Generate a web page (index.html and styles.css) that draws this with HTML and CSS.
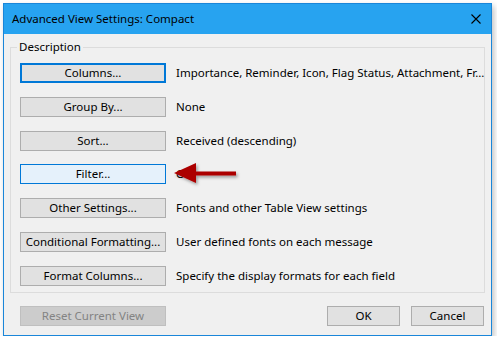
FILE: index.html
```html
<!DOCTYPE html>
<html>
<head>
<meta charset="utf-8">
<link rel="stylesheet" href="styles.css">
</head>
<body>
<div class="window">
  <div class="titlebar">
    <span class="title">Advanced View Settings: Compact</span>
    <svg class="close" width="10" height="10" viewBox="0 0 10 10"><path d="M0.5 0.5 L9.5 9.5 M9.5 0.5 L0.5 9.5" stroke="#000" stroke-width="1.1" fill="none"/></svg>
  </div>
  <div class="content">
    <div class="group">
      <span class="legend">Description</span>
      <div class="rows">
        <button class="btn focused">Columns...</button><span class="desc">Importance, Reminder, Icon, Flag Status, Attachment, Fr...</span>
        <button class="btn">Group By...</button><span class="desc">None</span>
        <button class="btn">Sort...</button><span class="desc">Received (descending)</span>
        <button class="btn hover">Filter...</button><span class="desc">Off</span>
        <button class="btn">Other Settings...</button><span class="desc">Fonts and other Table View settings</span>
        <button class="btn">Conditional Formatting...</button><span class="desc">User defined fonts on each message</span>
        <button class="btn">Format Columns...</button><span class="desc">Specify the display formats for each field</span>
      </div>
      <svg class="arrow" width="70" height="28" viewBox="0 0 70 28">
        <defs>
          <filter id="sh" x="-20%" y="-40%" width="150%" height="200%">
            <feDropShadow dx="1.5" dy="2" stdDeviation="1.5" flood-color="#000" flood-opacity="0.35"/>
          </filter>
        </defs>
        <path d="M2 11 L24 1 L24 9.5 L64 9.5 L64 13.5 L24 13.5 L24 21 Z" fill="#ac0000" filter="url(#sh)"/>
      </svg>
    </div>
    <div class="footer">
      <button class="btn disabled">Reset Current View</button>
      <div class="spacer"></div>
      <button class="btn small">OK</button>
      <button class="btn small">Cancel</button>
    </div>
  </div>
</div>
</body>
</html>
```

FILE: styles.css
```css
html, body {
  margin: 0;
  padding: 0;
  background: #ffffff;
}
body {
  font-family: "Noto Sans", "Open Sans", sans-serif;
  font-size: 11.5px;
  color: #000;
}
.window {
  margin: 3px 0 0 3px;
  width: 487px;
  height: 331px;
  border: 1px solid #1a86d9;
  background: #f0f0f0;
  box-shadow: 2px 3px 6px rgba(0,0,0,0.25);
  display: flex;
  flex-direction: column;
}
.titlebar {
  height: 29px;
  background: #27a3f0;
  display: flex;
  align-items: center;
  padding: 0 10px 1px 8px;
}
.title {
  flex: 1;
  font-size: 11.5px;
  color: #000;
}
.close {
  margin-right: 0;
}
.content {
  padding: 13px 6px 0 6px;
  flex: 1;
  display: flex;
  flex-direction: column;
}
.group {
  position: relative;
  border: 1px solid #dcdcdc;
  padding: 15px 9px 6px 9px;
}
.legend {
  position: absolute;
  top: -9px;
  left: 6px;
  padding: 0 2px 0 2px;
  background: #f0f0f0;
  line-height: 16px;
}
.rows {
  display: grid;
  grid-template-columns: 146px 1fr;
  column-gap: 10px;
  row-gap: 13.8px;
  align-items: center;
}
.btn {
  font-family: inherit;
  font-size: 11.5px;
  color: #000;
  height: 20px;
  width: 146px;
  padding: 0;
  margin: 0;
  background: #e1e1e1;
  border: 1px solid #adadad;
  line-height: 18px;
  white-space: nowrap;
}
.btn.focused {
  border: 2px solid #0078d7;
  line-height: 16px;
}
.btn.hover {
  background: #e5f1fb;
  border-color: #0078d7;
}
.btn.disabled {
  background: #cccccc;
  border-color: #bfbfbf;
  color: #838383;
}
.btn.small {
  width: 73px;
}
.desc {
  white-space: nowrap;
  line-height: 16px;
}
.arrow {
  position: absolute;
  left: 161px;
  top: 114px;
}
.footer {
  display: flex;
  margin-top: 13px;
  padding-left: 10px;
  padding-right: 1px;
  gap: 11px;
}
.spacer {
  flex: 1;
}
```
